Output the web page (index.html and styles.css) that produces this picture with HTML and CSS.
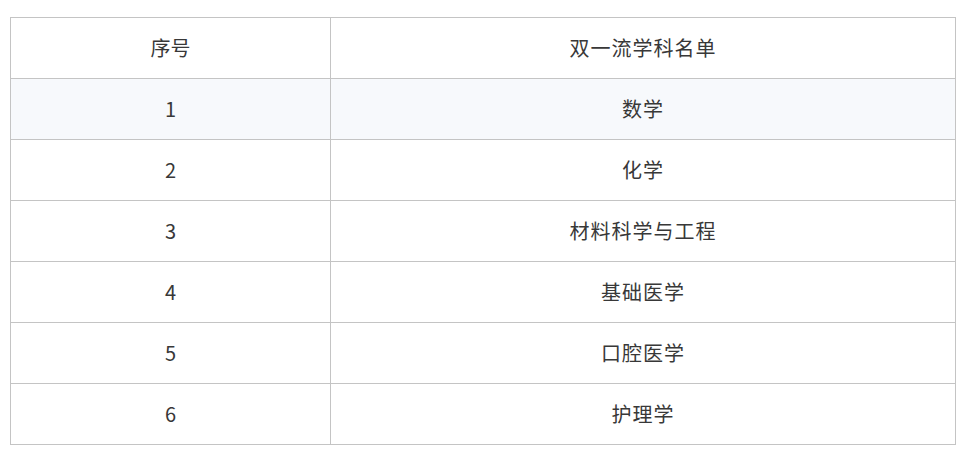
FILE: index.html
```html
<!DOCTYPE html>
<html lang="zh">
<head>
<meta charset="utf-8">
<link rel="stylesheet" href="styles.css">
</head>
<body>
<div class="wrap">
<table class="list">
  <thead>
    <tr><th class="c1">序号</th><th class="c2">双一流学科名单</th></tr>
  </thead>
  <tbody>
    <tr class="alt"><td>1</td><td>数学</td></tr>
    <tr><td>2</td><td>化学</td></tr>
    <tr><td>3</td><td>材料科学与工程</td></tr>
    <tr><td>4</td><td>基础医学</td></tr>
    <tr><td>5</td><td>口腔医学</td></tr>
    <tr><td>6</td><td>护理学</td></tr>
  </tbody>
</table>
</div>
</body>
</html>
```
FILE: styles.css
```css
html, body {
  margin: 0;
  padding: 0;
  background: #ffffff;
}
.wrap {
  padding: 17px 0 0 10px;
}
.list {
  border-collapse: collapse;
  width: 946px;
  font-family: "Noto Sans CJK SC", "Noto Sans", sans-serif;
  font-size: 20px;
  color: #383838;
  table-layout: fixed;
}
.list th, .list td {
  border: 1px solid #c4c4c4;
  height: 61px;
  padding: 0;
  text-align: center;
  vertical-align: middle;
  font-weight: normal;
  line-height: 1;
  box-sizing: border-box;
}
.list th.c1 {
  width: 320px;
}
.list th.c2,
.list td:last-child {
  letter-spacing: 1px;
}
.list tr.alt td {
  background: #f7f9fc;
}
```
